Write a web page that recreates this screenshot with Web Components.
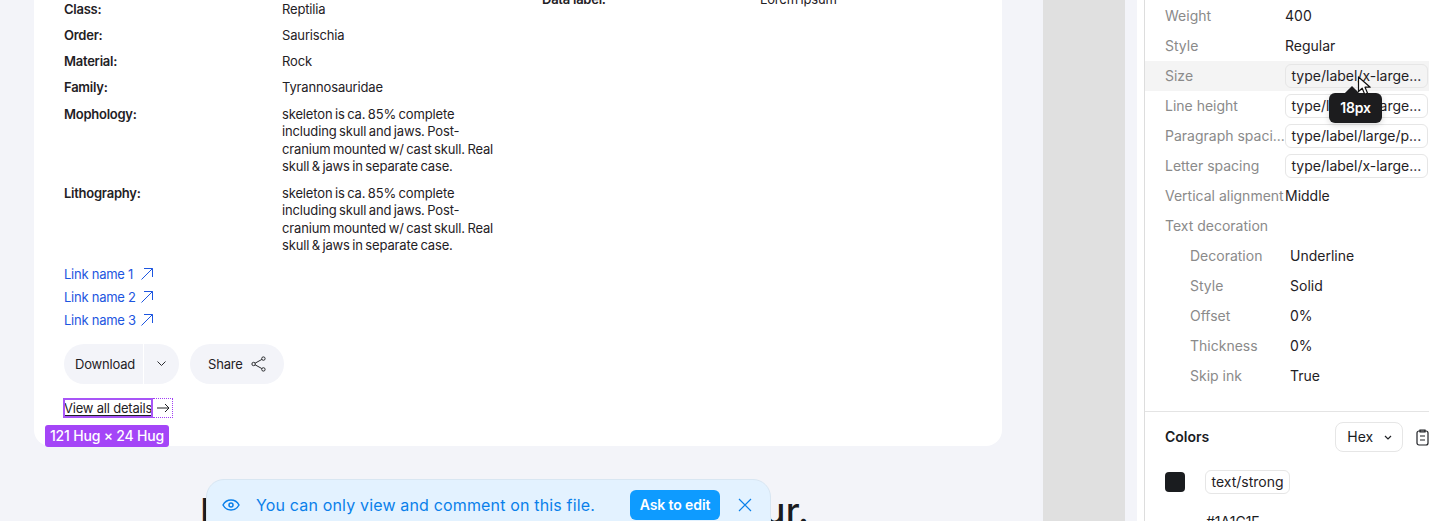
<!DOCTYPE html>
<html lang="en">
<head>
<meta charset="utf-8">
<title>Inspect</title>
<style>
  html, body { margin: 0; height: 521px; overflow: hidden; background: #fff; }
  body { font-family: Inter, "Liberation Sans", sans-serif; color: #1a1c1f; }
</style>
</head>
<body>
<app-shell>
  <spec-card slot="canvas">
    <spec-list slot="primary">
      <spec-row label="Class:">Reptilia</spec-row>
      <spec-row label="Order:">Saurischia</spec-row>
      <spec-row label="Material:">Rock</spec-row>
      <spec-row label="Family:">Tyrannosauridae</spec-row>
      <spec-row label="Mophology:">skeleton is ca. 85% complete including skull and jaws. Post-cranium mounted w/ cast skull. Real skull &amp; jaws in separate case.</spec-row>
      <spec-row label="Lithography:">skeleton is ca. 85% complete including skull and jaws. Post-cranium mounted w/ cast skull. Real skull &amp; jaws in separate case.</spec-row>
    </spec-list>
    <spec-list slot="secondary">
      <spec-row label="Data label:">Lorem ipsum</spec-row>
    </spec-list>
    <ext-link slot="links">Link name 1</ext-link>
    <ext-link slot="links">Link name 2</ext-link>
    <ext-link slot="links">Link name 3</ext-link>
    <card-actions slot="actions"></card-actions>
    <details-link slot="details"></details-link>
  </spec-card>
  <canvas-heading slot="canvas">Lorem ipsum dolor sit amet colour.</canvas-heading>
  <view-banner slot="canvas"></view-banner>
  <inspect-panel slot="panel"></inspect-panel>
</app-shell>

<script>
class AppShell extends HTMLElement {
  constructor() {
    super();
    this.attachShadow({ mode: 'open' });
    this.shadowRoot.innerHTML = `
      <style>
        :host { display: flex; height: 521px; overflow: hidden; }
        .canvas { position: relative; width: 1009px; padding-left: 34px; background: #f3f4f9; flex: none; overflow: hidden; }
        .gutter { width: 82px; background: #e0e0e0; flex: none; }
        .strip { width: 12px; background: #f3f4f9; flex: none; }
        .spacer { width: 7px; background: #fff; flex: none; }
        .panel { flex: 1; min-width: 0; }
      </style>
      <div class="canvas"><slot name="canvas"></slot></div>
      <div class="gutter"></div>
      <div class="strip"></div>
      <div class="spacer"></div>
      <div class="panel"><slot name="panel"></slot></div>
    `;
  }
}

class SpecCard extends HTMLElement {
  constructor() {
    super();
    this.attachShadow({ mode: 'open' });
    this.shadowRoot.innerHTML = `
      <style>
        :host {
          display: block; position: relative; box-sizing: border-box;
          width: 968px; height: 466px; margin-top: -20px; padding: 20.7px 0 0 30px;
          background: #fff; border-radius: 16px;
        }
        .columns { display: flex; }
        .primary { width: 478px; flex: none; }
        .secondary { margin-top: -9.700px; }
        .links { display: flex; flex-direction: column; gap: 5px; margin-top: 10.300px; }
        .actions { margin-top: 15px; }
        .details { margin-top: 14px; }
      </style>
      <div class="columns">
        <div class="primary"><slot name="primary"></slot></div>
        <div class="secondary"><slot name="secondary"></slot></div>
      </div>
      <div class="links"><slot name="links"></slot></div>
      <div class="actions"><slot name="actions"></slot></div>
      <div class="details"><slot name="details"></slot></div>
    `;
  }
}

class SpecList extends HTMLElement {
  constructor() {
    super();
    this.attachShadow({ mode: 'open' });
    this.shadowRoot.innerHTML = `
      <style>:host { display: flex; flex-direction: column; gap: 8.7px; }</style>
      <slot></slot>
    `;
  }
}

class SpecRow extends HTMLElement {
  constructor() {
    super();
    this.attachShadow({ mode: 'open' });
    this.shadowRoot.innerHTML = `
      <style>
        :host {
          display: grid; grid-template-columns: 218px 214px;
          font: 400 13px/17.55px Inter, "Liberation Sans", sans-serif; color: #1f2125;
        }
        .label { font-weight: 600; letter-spacing: -.25px; }
        .value { letter-spacing: -.15px; word-spacing: -1px; }
      </style>
      <div class="label">${this.getAttribute('label')}</div>
      <div class="value"><slot></slot></div>
    `;
  }
}

class ExtLink extends HTMLElement {
  constructor() {
    super();
    this.attachShadow({ mode: 'open' });
    this.shadowRoot.innerHTML = `
      <style>
        :host {
          display: grid; grid-template-columns: 71px 12px; align-items: center; column-gap: 6px; height: 18px;
          font: 400 13px/18px Inter, "Liberation Sans", sans-serif; letter-spacing: -.25px; color: #1d56e0; white-space: nowrap;
        }
        svg { width: 12px; height: 12px; }
      </style>
      <div><slot></slot></div>
      <svg viewBox="0 0 12 12" fill="none" stroke="currentColor" stroke-width="1"><path d="M.5 11.500 11.500 .5M3 .5h8.500V9"/></svg>
    `;
  }
}

class CardActions extends HTMLElement {
  constructor() {
    super();
    this.attachShadow({ mode: 'open' });
    this.shadowRoot.innerHTML = `
      <style>
        :host { display: flex; gap: 11px; font: 400 13px/40px Inter, "Liberation Sans", sans-serif; letter-spacing: -.2px; color: #1f2125; }
        .pill { display: flex; align-items: center; height: 40px; background: #f3f4f9; border-radius: 20px; }
        .main { width: 80px; padding-left: 11px; box-sizing: border-box; border-right: 1px solid #fff; }
        .caret { width: 35px; display: flex; justify-content: center; }
        .share { box-sizing: border-box; width: 94px; padding-left: 18px; gap: 8px; }
        svg { display: block; flex: none; }
      </style>
      <div class="pill">
        <div class="main">Download</div>
        <div class="caret"><svg width="9" height="5" viewBox="0 0 9 5" fill="none" stroke="#2a2c30" stroke-width="1"><path d="M.5.5l4 4 4-4"/></svg></div>
      </div>
      <div class="pill share">
        <span>Share</span>
        <svg width="15" height="16" viewBox="0 0 15 16" fill="none" stroke="#2a2c30" stroke-width="1"><circle cx="2.600" cy="8" r="1.700"/><circle cx="12.400" cy="2.600" r="1.700"/><circle cx="12.400" cy="13.400" r="1.700"/><path d="M4.100 7.200 10.900 3.400M4.100 8.800l6.800 3.800"/></svg>
      </div>
    `;
  }
}

class DetailsLink extends HTMLElement {
  constructor() {
    super();
    this.attachShadow({ mode: 'open' });
    this.shadowRoot.innerHTML = `
      <style>
        :host {
          display: flex; position: relative; align-items: center; gap: 5px; width: max-content; height: 20px;
          font: 400 13px/20px Inter, "Liberation Sans", sans-serif; letter-spacing: -.2px; color: #1f2125;
        }
        .text { text-decoration: underline; text-underline-offset: 2px; }
        svg { flex: none; }
        .solid { position: absolute; left: -1px; top: 0; width: 86px; height: 16px; border: 2px solid #a855f7; }
        .dotted { position: absolute; left: 89px; top: 0; width: 19px; height: 18px; border: 1px dotted #a13ff5; border-left: 0; }
        .size {
          position: absolute; left: -19px; top: 27px; height: 22px; padding: 0 5px; border-radius: 3px; white-space: nowrap;
          background: #a445f7; color: #fff; font: 500 14px/22px Inter, "Liberation Sans", sans-serif; letter-spacing: -.2px;
        }
      </style>
      <span class="text">View all details</span>
      <svg width="13" height="10" viewBox="0 0 13 10" fill="none" stroke="#1f2125" stroke-width="1"><path d="M0 5h12M8 1l4 4-4 4"/></svg>
      <div class="solid"></div>
      <div class="dotted"></div>
      <div class="size">121 Hug × 24 Hug</div>
    `;
  }
}

class CanvasHeading extends HTMLElement {
  constructor() {
    super();
    this.attachShadow({ mode: 'open' });
    this.shadowRoot.innerHTML = `
      <style>
        :host {
          display: block; width: max-content; margin: 43.500px 0 0 166px;
          font: 500 36px/42px Inter, "Liberation Sans", sans-serif; letter-spacing: .46px; color: #1a1c1f; white-space: nowrap;
        }
      </style>
      <slot></slot>
    `;
  }
}

class ViewBanner extends HTMLElement {
  constructor() {
    super();
    this.attachShadow({ mode: 'open' });
    this.shadowRoot.innerHTML = `
      <style>
        :host {
          display: flex; position: absolute; left: 206px; top: 479px; box-sizing: border-box; width: 565px; height: 70px;
          padding: 10px 18px 0 15px; align-items: flex-start;
          background: #e3f2ff; border: 1px solid #d8e6f2; border-radius: 18px; color: #0a80ea;
          font: 400 16px/30px Inter, "Liberation Sans", sans-serif; letter-spacing: .16px;
        }
        .eye { margin: 6px 16px 0 0; flex: none; }
        .msg { flex: 1; white-space: nowrap; }
        .ask {
          width: 90px; height: 30px; margin-right: 18px; flex: none; text-align: center; border-radius: 6px;
          background: #0e9bff; color: #fff; font: 600 14px/30px Inter, "Liberation Sans", sans-serif; letter-spacing: -.1px;
        }
        .close { margin-top: 8px; flex: none; }
      </style>
      <svg class="eye" width="18" height="18" viewBox="0 0 18 18" fill="none" stroke="#0a80ea" stroke-width="1.500"><path d="M1 9c1.800-3.400 4.500-5 8-5s6.200 1.600 8 5c-1.800 3.400-4.500 5-8 5S2.800 12.400 1 9Z"/><circle cx="9" cy="9" r="2"/></svg>
      <span class="msg">You can only view and comment on this file.</span>
      <div class="ask">Ask to edit</div>
      <svg class="close" width="14" height="14" viewBox="0 0 14 14" fill="none" stroke="#0a80ea" stroke-width="1.200"><path d="M1 1l12 12M13 1 1 13"/></svg>
    `;
  }
}

class PropRow extends HTMLElement {
  constructor() {
    super();
    this.attachShadow({ mode: 'open' });
    const indent = this.hasAttribute('indent');
    this.shadowRoot.innerHTML = `
      <style>
        :host {
          display: flex; align-items: center; height: 30px; padding-left: ${indent ? 45 : 20}px;
          font: 400 14px/20px Inter, "Liberation Sans", sans-serif; color: #1f2125; white-space: nowrap;
        }
        :host([hovered]) { background: #f4f4f4; }
        .label { width: ${indent ? 100 : 120}px; flex: none; color: #8a8a8a; }
      </style>
      <div class="label">${this.getAttribute('label')}</div>
      <slot></slot>
    `;
  }
}

class PropChip extends HTMLElement {
  constructor() {
    super();
    this.attachShadow({ mode: 'open' });
    this.shadowRoot.innerHTML = `
      <style>
        :host {
          display: block; box-sizing: border-box; height: 24px; padding: 0 5.500px; width: max-content;
          border: 1px solid #e6e6e6; border-radius: 6px; background: #fff;
          font: 400 14px/22px Inter, "Liberation Sans", sans-serif; color: #1f2125; white-space: nowrap;
        }
        :host([hovered]) { background: #f4f4f4; }
      </style>
      <slot></slot>
    `;
  }
}

class ColorsSection extends HTMLElement {
  constructor() {
    super();
    this.attachShadow({ mode: 'open' });
    this.shadowRoot.innerHTML = `
      <style>
        :host { display: block; padding: 10px 0 0 20px; border-top: 1px solid #e4e4e4; margin-top: 20px; font: 400 14px/20px Inter, "Liberation Sans", sans-serif; }
        .head { display: flex; align-items: center; height: 30px; }
        h3 { margin: 0; width: 170px; margin-right: 1px; font: 600 14px/20px Inter, "Liberation Sans", sans-serif; color: #1a1c1f; }
        .hex { display: flex; align-items: center; gap: 11px; box-sizing: border-box; width: 68px; height: 30px; padding-left: 11px; border: 1px solid #e6e6e6; border-radius: 8px; }
        .copy { margin-left: 13px; flex: none; }
        .swatch-row { display: flex; align-items: center; gap: 20px; margin-top: 18px; }
        .swatch { width: 20px; height: 20px; border-radius: 4px; background: #1a1c1f; }
        .code { margin: 18px 0 0 41px; }
      </style>
      <div class="head">
        <h3>Colors</h3>
        <div class="hex">Hex
          <svg width="8" height="5" viewBox="0 0 8 5" fill="none" stroke="#1f2125" stroke-width="1.200"><path d="M1 1l3 3 3-3"/></svg>
        </div>
        <svg class="copy" width="13" height="17" viewBox="0 0 13 17" fill="none" stroke="#1f2125" stroke-width="1.200"><rect x="1" y="2" width="11" height="14" rx="2"/><path d="M4 1h5v2H4zM4 7h5M4 11h5"/></svg>
      </div>
      <div class="swatch-row">
        <div class="swatch"></div>
        <prop-chip>text/strong</prop-chip>
      </div>
      <div class="code">#1A1C1F</div>
    `;
  }
}

class InspectPanel extends HTMLElement {
  constructor() {
    super();
    this.attachShadow({ mode: 'open' });
    this.shadowRoot.innerHTML = `
      <style>
        :host { display: block; position: relative; box-sizing: border-box; height: 521px; padding-top: 1px; border-left: 1px solid #ddd; background: #fff; overflow: hidden; }
        .tip {
          position: absolute; left: 184px; top: 93px; width: 53px; height: 30px; border-radius: 6px;
          background: #1c1c1e; color: #fff; text-align: center; font: 600 14px/30px Inter, "Liberation Sans", sans-serif; letter-spacing: -.2px;
          box-shadow: 0 2px 6px rgba(0,0,0,.15);
        }
        .tip::before {
          content: ""; position: absolute; left: 18px; top: -5px; width: 10px; height: 10px;
          background: #1c1c1e; transform: rotate(45deg);
        }
        .cursor { position: absolute; left: 212px; top: 76px; }
      </style>
      <prop-row label="Weight">400</prop-row>
      <prop-row label="Style">Regular</prop-row>
      <prop-row label="Size" hovered><prop-chip hovered>type/label/x-large...</prop-chip></prop-row>
      <prop-row label="Line height"><prop-chip>type/label/x-large...</prop-chip></prop-row>
      <prop-row label="Paragraph spaci..."><prop-chip>type/label/large/p...</prop-chip></prop-row>
      <prop-row label="Letter spacing"><prop-chip>type/label/x-large...</prop-chip></prop-row>
      <prop-row label="Vertical alignment">Middle</prop-row>
      <prop-row label="Text decoration"></prop-row>
      <prop-row indent label="Decoration">Underline</prop-row>
      <prop-row indent label="Style">Solid</prop-row>
      <prop-row indent label="Offset">0%</prop-row>
      <prop-row indent label="Thickness">0%</prop-row>
      <prop-row indent label="Skip ink">True</prop-row>
      <colors-section></colors-section>
      <div class="tip">18px</div>
      <svg class="cursor" width="15" height="20" viewBox="0 0 15 20"><path d="M1.500 1v14.500l3.700-3.300 2.500 6 2.800-1.200-2.500-5.800h5.200Z" fill="#fff" stroke="#111" stroke-width="1.200" stroke-linejoin="round"/></svg>
    `;
  }
}

customElements.define('app-shell', AppShell);
customElements.define('spec-card', SpecCard);
customElements.define('spec-list', SpecList);
customElements.define('spec-row', SpecRow);
customElements.define('ext-link', ExtLink);
customElements.define('card-actions', CardActions);
customElements.define('details-link', DetailsLink);
customElements.define('canvas-heading', CanvasHeading);
customElements.define('view-banner', ViewBanner);
customElements.define('prop-row', PropRow);
customElements.define('prop-chip', PropChip);
customElements.define('colors-section', ColorsSection);
customElements.define('inspect-panel', InspectPanel);
</script>
</body>
</html>
